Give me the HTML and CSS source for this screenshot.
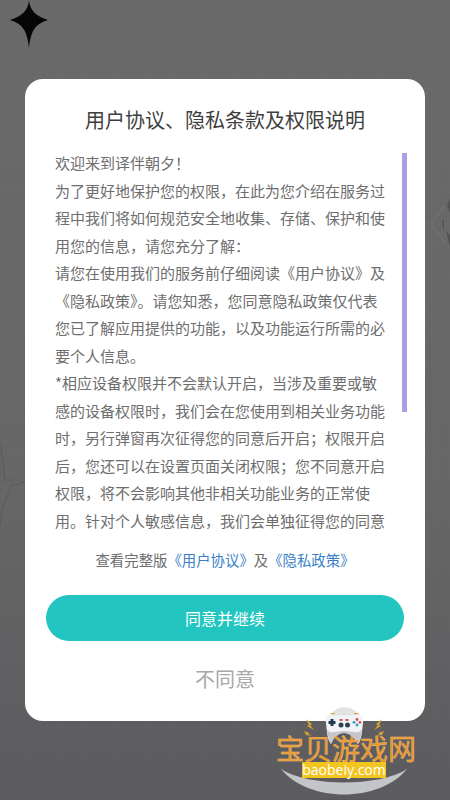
FILE: index.html
```html
<!DOCTYPE html>
<html>
<head>
<title>用户协议</title>
<link rel="stylesheet" href="styles.css">
</head>
<body>
<svg class='star' viewBox='0 0 40 50' width='40' height='50'>
	<path d='M19 0 C20 11 26 16 38 20 C26 24 21 29 19 48 C17 29 12 24 0 20 C12 16 18 11 19 0 Z' fill='#060606' />
</svg>
<svg class='bg-mark bg-mark-right' viewBox='0 0 25 60' width='25' height='60'>
	<path d='M6 27 L20 8 M6 27 L20 46' stroke='#6f6f6f' stroke-width='2' fill='none' />
	<path d='M22 8 L25 2 L25 16 Z M17 24 L19 22 L19 36 Z M21 34 L25 38 L25 50 Z' fill='#4a4a4a' opacity='0.7' />
</svg>
<svg class='bg-mark bg-mark-left' viewBox='0 0 25 100' width='25' height='100'>
	<path d='M1 16 L5 50 L13 50 M25 52 L11 56 L2 80 L0 96' stroke='#5a5a5a' stroke-width='1' fill='none' />
</svg>
<section class='dialog'>
	<h1 class='dialog-title'>用户协议、隐私条款及权限说明</h1>
	<div class='terms'>
		<div class='terms-text'>
			<p>欢迎来到译伴朝夕！</p>
			<p>为了更好地保护您的权限，在此为您介绍在服务过程中我们将如何规范安全地收集、存储、保护和使用您的信息，请您充分了解：</p>
			<p>请您在使用我们的服务前仔细阅读《用户协议》及《隐私政策》。请您知悉，您同意隐私政策仅代表您已了解应用提供的功能，以及功能运行所需的必要个人信息。</p>
			<p>*相应设备权限并不会默认开启，当涉及重要或敏感的设备权限时，我们会在您使用到相关业务功能时，另行弹窗再次征得您的同意后开启；权限开启后，您还可以在设置页面关闭权限；您不同意开启权限，将不会影响其他非相关功能业务的正常使用。针对个人敏感信息，我们会单独征得您的同意</p>
		</div>
		<div class='scrollbar'></div>
	</div>
	<p class='links'>查看完整版<a class='link'>《用户协议》</a>及<a class='link'>《隐私政策》</a></p>
	<div class='btn btn-agree'>同意并继续</div>
	<div class='btn-refuse'>不同意</div>
</section>
<div class='logo'>
	<svg class='logo-art' viewBox='0 0 150 90' width='150' height='90'>
		<!-- smile under the name -->
		<path d='M7 62 C35 96 105 96 133 62 C105 80 35 80 7 62 Z' fill='#c4c5c9' />
		<!-- gamepad -->
		<path d='M56 10 C60 -3 81 -3 85 10 L85 24 L56 24 Z' fill='#e2e2e0' />
		<path d='M56 6 L61 6 L59 9 Z M80 6 L85 6 L82 9 Z' fill='#d9a648' />
		<path d='M57 7 C64 9 78 9 84 7 C88 7 90 11 89 16 C88 24 88 32 84 37 C81 32 77 26 70 26 C63 26 59 32 57 37 C53 32 53 24 52 16 C51 11 53 7 57 7 Z' fill='#f2f3f6' />
		<path d='M53 22 C54 30 55 34 57 37 C59 32 63 26 70 26 C77 26 81 32 84 37 C86 34 87 30 88 22 C85 28 80 24 70 24 C60 24 56 28 53 22 Z' fill='#c6c7cd' />
		<path d='M61 36 C63 29 66 27 70 27 C74 27 78 29 80 36 Z' fill='#5a5b5f' />
		<path d='M56.500 12 H59.500 V14 H61.500 V17 H59.500 V19 H56.500 V17 H54.500 V14 H56.500 Z' fill='#1d3b4e' />
		<rect x='65.500' y='12' width='3' height='2' fill='#d25050' />
		<rect x='71.500' y='12' width='3' height='2' fill='#d25050' />
		<circle cx='67' cy='18' r='2.500' fill='#2f4250' />
		<circle cx='73.500' cy='18' r='2.500' fill='#2f4250' />
		<circle cx='83' cy='12.500' r='1.400' fill='#d25050' />
		<circle cx='83' cy='18' r='1.400' fill='#2a9fd0' />
		<circle cx='80' cy='15.300' r='1.400' fill='#2a9fd0' />
		<circle cx='86' cy='15.300' r='1.400' fill='#d25050' />
		<!-- bolts -->
		<path d='M32 12 L38 17 L36 18 L40 23 L33 19 L35 18 Z M108 12 L102 17 L104 18 L100 23 L107 19 L105 18 Z' fill='#dba12e' />
		<path d='M30 24 L36 26 L34 27 L38 29 L32 28 Z M110 24 L104 26 L106 27 L102 29 L108 28 Z' fill='#dba12e' />
	</svg>
	<div class='logo-name'>宝贝游戏网</div>
	<div class='logo-url'>baobeiy.com</div>
</div>
</body>
</html>
```

FILE: styles.css
```css
html, body {
	margin: 0;
	height: 100%;
}

body {
	position: relative;
	width: 450px;
	height: 800px;
	overflow: hidden;
	box-sizing: border-box;
	padding: 79px 25px 0;
	font-family: "Noto Sans CJK SC", "Noto Sans", sans-serif;
	background-color: #666666;
	background-image:
		repeating-linear-gradient(90deg, rgba(0,0,0,0.025) 0 1px, transparent 1px 11px),
		repeating-linear-gradient(0deg, rgba(0,0,0,0.025) 0 1px, transparent 1px 11px),
		linear-gradient(180deg, #6a6a6a 0%, #676767 60%, #5c5c60 100%);
}

.star {
	position: absolute;
	left: 10px;
	top: 0;
}

.bg-mark {
	position: absolute;
}

.bg-mark-right {
	left: 425px;
	top: 197px;
}

.bg-mark-left {
	left: 0;
	top: 430px;
}

.dialog {
	position: relative;
	height: 642px;
	box-sizing: border-box;
	background: #ffffff;
	border-radius: 18px;
	padding: 26px 21px 0;
	display: flex;
	flex-direction: column;
}

.dialog-title {
	margin: 0;
	font-size: 20px;
	font-weight: 400;
	line-height: 30px;
	text-align: center;
	color: #3f3f3f;
}

.terms {
	display: flex;
	justify-content: space-between;
	margin: 17px -3px 0 0;
	padding-left: 9px;
	height: 388px;
	overflow: hidden;
}

.terms-text {
	width: 330px;
	margin-top: -3px;
	font-size: 15px;
	line-height: 27.5px;
	color: #6e6e6e;
}

.terms-text p {
	margin: 0;
}

.scrollbar {
	width: 5px;
	height: 259px;
	margin-top: 1px;
	background: #a99fe3;
}

.links {
	margin: 8px 0 0;
	font-size: 14.4px;
	line-height: 24px;
	text-align: center;
	color: #6e6e6e;
}

.link {
	color: #3a7fc8;
}

.btn {
	text-align: center;
}

.btn-agree {
	margin-top: 23px;
	height: 46px;
	line-height: 46px;
	border-radius: 23px;
	background: #22c5bf;
	color: #ffffff;
	font-size: 16px;
}

.btn-refuse {
	margin-top: 23px;
	font-size: 20px;
	line-height: 30px;
	text-align: center;
	color: #a8a8a8;
}

.logo {
	position: absolute;
	left: 274px;
	top: 707px;
	width: 150px;
	height: 90px;
}

.logo-art {
	position: absolute;
	left: 0;
	top: 0;
}

.logo-name {
	position: absolute;
	left: 2px;
	top: 27px;
	font-size: 28px;
	line-height: 28px;
	white-space: nowrap;
	color: #e9952a;
	-webkit-text-stroke: 0.4px #f3c27a;
}

.logo-url {
	position: absolute;
	left: 28px;
	top: 55px;
	width: 84px;
	height: 16px;
	background: #f3c521;
	color: #ffffff;
	font-family: "Open Sans", sans-serif;
	font-size: 14px;
	line-height: 16px;
	text-align: center;
}
```
